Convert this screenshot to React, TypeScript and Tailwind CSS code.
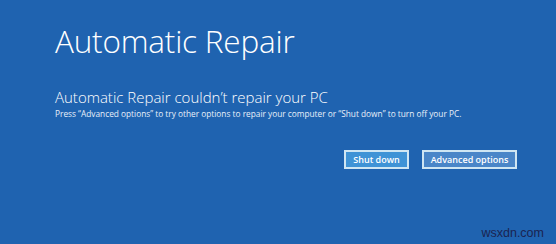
export default function App() {
  return (
    <main className="relative w-[556px] h-[244px] overflow-hidden bg-[#1f63b0] text-white font-['Open_Sans',sans-serif]">
      <div className="pl-[55px] pt-[19px]">
        <h1 className="text-[31.5px] font-light leading-[44px] tracking-[-0.2px]">Automatic Repair</h1>

        <h2 className="mt-[24px] text-[15px] font-light leading-[20px]">
          Automatic Repair couldn’t repair your PC
        </h2>
        <p className="mt-[1px] text-[8.3px] leading-[12px] text-[#e8f0fa]">
          Press “Advanced options” to try other options to repair your computer or “Shut down” to turn off your PC.
        </p>

        <div className="flex justify-end gap-[13px] w-[462px] mt-[30px]">
          <button className="w-[65px] h-[19px] border-2 border-[#cfe6f3] bg-[#3f93d6] text-[9px] font-semibold leading-none text-white">
            Shut down
          </button>
          <button className="w-[95px] h-[19px] border-2 border-[#cfe6f3] bg-[#4a86c8] text-[9px] font-semibold leading-none text-white">
            Advanced options
          </button>
        </div>
      </div>

      <span className="absolute right-[12px] bottom-[3px] text-[12.5px] leading-[16px] text-[#1b2450] font-['Liberation_Sans',sans-serif]">
        wsxdn.com
      </span>
    </main>
  );
}
